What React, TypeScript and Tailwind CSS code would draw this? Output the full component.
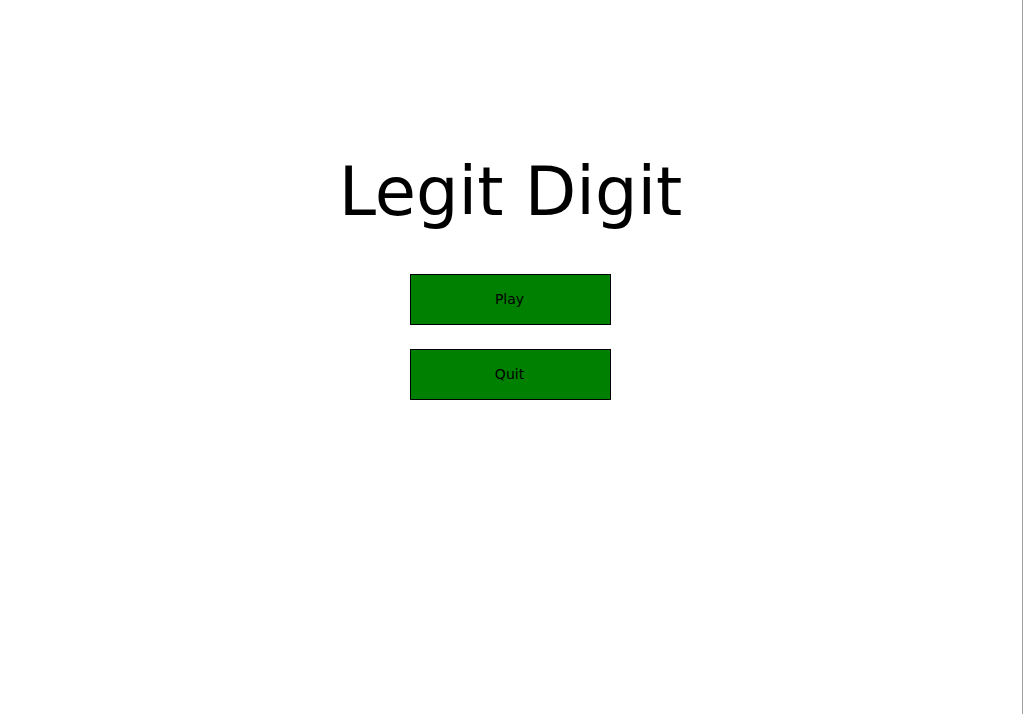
export default function App() {
    const buttons = ['Play', 'Quit'];

    return (
        <div className="flex h-[714px] w-full bg-white font-['DejaVu_Sans',sans-serif] text-black">
            <div className="flex w-[1021px] flex-col items-center pt-[153px]">
                <h1 className="text-[67px] leading-[78px] font-normal">Legit Digit</h1>
                <div className="mt-[43px] flex flex-col gap-[24px]">
                    {buttons.map(label => (
                        <button
                            key={label}
                            type="button"
                            className="h-[51px] w-[201px] border border-black bg-[#008000] pr-[2px] text-[14px] text-black"
                        >
                            {label}
                        </button>
                    ))}
                </div>
            </div>
            <div className="ml-px w-px bg-[#a0a0a0]" />
        </div>
    );
}
